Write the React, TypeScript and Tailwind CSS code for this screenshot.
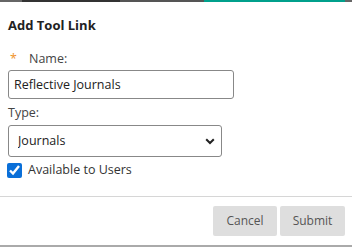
import React from 'react';

export default function App() {
  return (
    <div className="w-[352px] h-[247px] bg-white overflow-hidden text-[#333] font-['Open_Sans',sans-serif] text-[12px] flex flex-col">
      {/* strip of page behind the dialog */}
      <div className="flex h-[2px] shrink-0">
        <div className="w-[22px] bg-[#666]" />
        <div className="w-[98px] bg-[#333]" />
        <div className="w-[84px] bg-[#555]" />
        <div className="flex-1 bg-[#00a08c]" />
        <div className="w-[7px] bg-[#666]" />
      </div>

      <div className="px-2 pt-[14px] flex flex-col">
        <h2 className="font-bold text-[13px] leading-[18px] text-[#222]">Add Tool Link</h2>

        <div className="mt-[16px] flex items-center h-[18px] text-[12.5px]">
          <span className="text-[#f0932b] w-[21px] pl-[2px]">*</span>
          <span className="text-[#444]">Name:</span>
        </div>
        <input
          className="mt-[2px] w-[226px] h-[29px] border border-[#888] rounded-[3px] px-[5px] text-[12.5px] text-[#222] outline-none"
          defaultValue="Reflective Journals"
        />

        <div className="mt-[5px] h-[18px] flex items-center text-[#444] text-[12.5px]">Type:</div>
        <div className="relative mt-[3px] w-[214px]">
          <select className="appearance-none w-full h-[32px] border border-[#888] rounded-[3px] pl-[9px] text-[12.5px] text-[#222] bg-white outline-none">
            <option>Journals</option>
          </select>
          <svg className="absolute right-[7px] top-[13px] pointer-events-none" width="10" height="7" viewBox="0 0 10 7">
            <path d="M1.2 1.2 L5 5 L8.8 1.2" fill="none" stroke="#222" strokeWidth="2" />
          </svg>
        </div>

        <label className="mt-[4px] h-[18px] flex items-center gap-[6px] -ml-[1px]">
          <input type="checkbox" defaultChecked className="w-[15px] h-[15px] m-0 accent-[#0a6fd8]" />
          <span className="text-[#333] text-[12.5px]">Available to Users</span>
        </label>
      </div>

      <div className="mt-[17px] border-t border-[#d6d6d6]" />

      <div className="flex justify-end gap-[3px] pr-[7px] pt-[9px]">
        <button className="w-[64px] h-[30px] bg-[#dedede] rounded-[2px] text-[#555] text-[12px]">Cancel</button>
        <button className="w-[65px] h-[30px] bg-[#dedede] rounded-[2px] text-[#555] text-[12px]">Submit</button>
      </div>

      <div className="mt-[9px] border-t-2 border-[#aaa]" />
    </div>
  );
}
